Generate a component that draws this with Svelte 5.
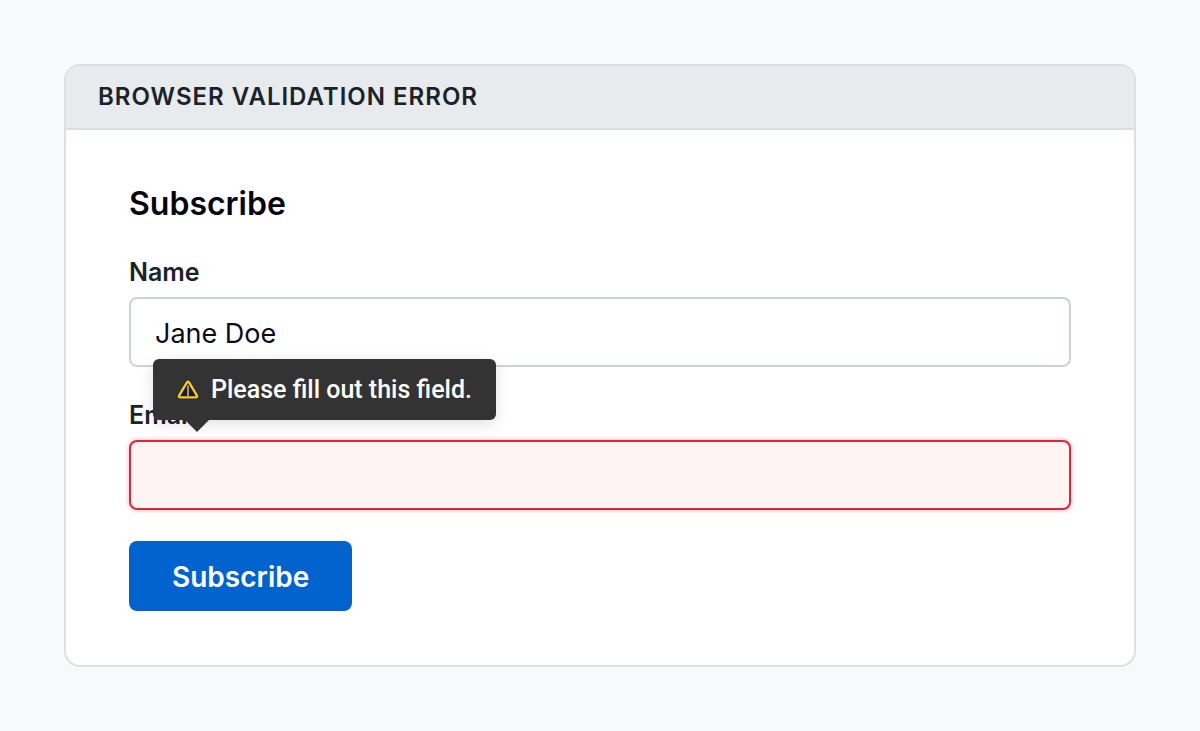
<script lang="ts">
  let name = $state("Jane Doe");
  let email = $state("");
  let invalid = $state(true);

  function submit(event: SubmitEvent) {
    event.preventDefault();
    invalid = !email.trim();
  }
</script>

<main class="page">
  <section class="card">
    <header class="card-header">Browser validation error</header>

    <form class="card-body" novalidate onsubmit={submit}>
      <h2>Subscribe</h2>

      <div class="field">
        <label for="name">Name</label>
        <input id="name" type="text" bind:value={name} />
      </div>

      <div class="field">
        <label for="email">Email</label>
        <div class="control">
          <input
            id="email"
            type="email"
            class:invalid
            aria-invalid={invalid}
            aria-describedby="email-error"
            bind:value={email}
          />
          {#if invalid}
            <div class="tooltip" id="email-error" role="alert">
              <svg class="icon" viewBox="0 0 22 22" aria-hidden="true">
                <path
                  d="M9.8 3.6 Q11 1.8 12.2 3.6 L19.8 16.4 Q20.8 18.4 18.6 18.4 H3.4 Q1.2 18.4 2.2 16.4 Z"
                  fill="#1c2148"
                  stroke="#1f2448"
                  stroke-width="4"
                  stroke-linejoin="round"
                />
                <path
                  d="M9.8 3.6 Q11 1.8 12.2 3.6 L19.8 16.4 Q20.8 18.4 18.6 18.4 H3.4 Q1.2 18.4 2.2 16.4 Z"
                  fill="#161a40"
                  stroke="#fbc918"
                  stroke-width="2.4"
                  stroke-linejoin="round"
                />
                <path d="M11 6.5 V17" fill="none" stroke="#b39a2c" stroke-width="2" />
              </svg>
              <span>Please fill out this field.</span>
            </div>
          {/if}
        </div>
      </div>

      <button type="submit">Subscribe</button>
    </form>
  </section>
</main>

<style>
  :global(body) {
    margin: 0;
    background: #f8f9fb;
  }

  .page {
    padding: 64px;
    color: #1b2229;
    font-family: Inter, "Liberation Sans", sans-serif;
  }

  .card {
    border: 2px solid #dcdfe4;
    border-radius: 16px;
    overflow: hidden;
    background: #fff;
  }

  .card-header {
    padding: 15px 32px;
    border-bottom: 2px solid #dbdfe3;
    background: #e7ebee;
    font-size: 24px;
    font-weight: 600;
    line-height: 32px;
    letter-spacing: 1px;
    text-transform: uppercase;
  }

  .card-body {
    display: flex;
    flex-direction: column;
    align-items: flex-start;
    gap: 31px;
    padding: 54px 63px;
  }

  h2 {
    margin: 0;
    color: #05050f;
    font-size: 32px;
    font-weight: 600;
    line-height: 40px;
  }

  .field {
    display: flex;
    flex-direction: column;
    gap: 8px;
    width: 100%;
  }

  label {
    font-size: 25px;
    font-weight: 600;
    line-height: 34px;
  }

  .control {
    position: relative;
    display: flex;
  }

  input {
    box-sizing: border-box;
    width: 100%;
    height: 70px;
    padding: 2px 24px 0;
    border: 2px solid #ccd3da;
    border-radius: 8px;
    background: #fff;
    color: #0b0b1c;
    font-family: inherit;
    font-size: 27px;
  }

  .invalid {
    border-color: #e02438;
    background: #fff4f4;
    box-shadow: 0 0 3px 2px #fbd9dc;
  }

  .tooltip {
    position: absolute;
    bottom: calc(100% + 20px);
    left: 24px;
    display: flex;
    align-items: center;
    gap: 12px;
    padding: 14px 24px;
    border-radius: 6px;
    background: #333;
    color: #fff;
    font-family: Roboto, sans-serif;
    font-size: 25px;
    font-weight: 500;
    line-height: 33px;
    white-space: nowrap;
    box-shadow: 0 4px 16px rgba(0, 0, 0, 0.12);
  }

  .tooltip::after {
    content: "";
    position: absolute;
    top: 100%;
    left: 32px;
    border: 12px solid transparent;
    border-top-color: #333;
    border-bottom: 0;
  }

  .icon {
    width: 22px;
    height: 22px;
  }

  button {
    height: 70px;
    padding: 2px 43px 0;
    border: 0;
    border-radius: 8px;
    background: #0263cf;
    color: #fff;
    font-family: inherit;
    font-size: 28px;
    font-weight: 600;
    cursor: pointer;
  }
</style>
